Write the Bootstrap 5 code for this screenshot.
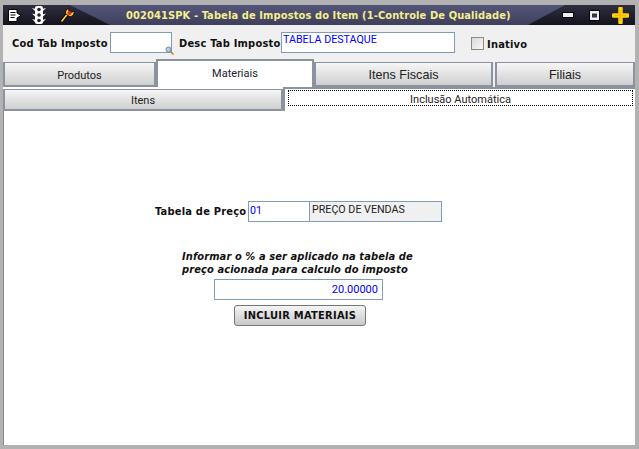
<!DOCTYPE html>
<html lang="pt"><head><meta charset="utf-8"><title>Tabela de Impostos</title>
<link href="https://cdn.jsdelivr.net/npm/bootstrap@5.3.0/dist/css/bootstrap.min.css" rel="stylesheet">
<style>
html,body{height:100%;margin:0}
body{background:#b2b2b2;padding:5px 4px 4px 3px;font-family:"DejaVu Sans",sans-serif;overflow:hidden}
.app-win{width:632px;height:440px;background:#fff;display:flex;flex-direction:column}
.title-bar{height:20px;background:linear-gradient(180deg,#2e2e40,#14141e);color:#f4f08c;font:bold 11px/19px "DejaVu Sans",sans-serif;font-stretch:condensed;position:relative;overflow:hidden;flex:none}
.title-bar::before{content:"";position:absolute;inset:0;background:linear-gradient(180deg,#55557a,#3f3f5c);clip-path:polygon(67px 0,562px 0,525px 100%,107px 100%)}
.title-bar>*{position:relative}
.title-bar svg{display:block;flex:none}
.ic-doc{margin-left:5px}.ic-light{margin-left:10px}.ic-key{margin-left:14px}
.title-txt{letter-spacing:.11px;white-space:nowrap;margin-left:51px}
.ic-min{margin-right:15px}.ic-max{margin-right:12px}.ic-plus{margin-right:6px}
.form-bar{height:35px;background:#f0f0f0;flex:none;padding-left:9px}
.lbl{font:bold 11px "DejaVu Sans",sans-serif;font-stretch:condensed;color:#111;white-space:nowrap;letter-spacing:.22px;flex:none}
.w-cod{width:98px;padding-top:2px}.w-desc{width:102px;padding-top:2px}.w-price{width:93px}
.fld{height:21px;border:1px solid #7f9db9;background:#fff;color:#00f;font:10.7px/14px Roboto,sans-serif;padding:0 1px;white-space:nowrap}
.fld-cod{width:62px;margin-right:7px;position:relative}
.fld-desc{width:174px}
.lens{position:absolute;right:-3px;bottom:-3px}
.chk-box{width:13px;height:13px;border:1px solid #8a8a8a;background:linear-gradient(135deg,#d8d8d8,#f8f8f8);margin:2px 3px 0 16px}
.tab-a{height:27px;padding-top:2px;background:#f0f0f0;flex:none}
.tab-item{background:linear-gradient(180deg,#f6f6f6,#cfcfcf);border:2px solid #8c93a0;border-top-width:1px;color:#222;text-align:center;font:11px/25px Roboto,sans-serif}
.tab-item.on{background:#fff;border-top-width:2px;border-bottom:0;height:28px;margin-top:-3px;color:#223;line-height:25px;position:relative}
.tb1{width:153px}.tb2{width:158px}.tb3{width:179px;margin-right:2px}.tb4{width:140px}
.wide{font:12.6px/25px "Liberation Sans",sans-serif}
.tab-b{height:24px;background:#fff;flex:none}
.sub1{width:280px;height:22px;margin-top:2px;line-height:22px;border-right-width:2px}
.sub2{flex:1;border-top:2px solid #8c93a0;border-left:2px solid #8c93a0;padding:1px 2px 0 3px}
.dots{height:16px;border:1px dotted #000;text-align:center;font:11px/17px Roboto,sans-serif;color:#222}
.panel{flex:1;border-left:1px solid #808890}
.price-row{margin:90px 0 0 151px}
.p-code{width:62px;padding-top:2px}
.p-desc{width:133px;background:#f0f0f0;color:#222;margin-left:-1px;padding:1px 2px 0}
.note{font:italic bold 11px/13px "DejaVu Sans",sans-serif;font-stretch:condensed;color:#111;margin:28px 0 0 178px;letter-spacing:.1px;white-space:nowrap}
.pct{width:169px;margin:3px 0 0 210px;text-align:right;padding-right:4px;line-height:19px;font-size:11px}
.inc-btn{display:block;width:132px;height:21px;margin:5px 0 0 230px;border:1px solid #777;border-radius:3px;background:linear-gradient(180deg,#f4f4f4,#c8c8c8);font:bold 11px/19px "DejaVu Sans",sans-serif;font-stretch:condensed;color:#111;padding:0;letter-spacing:.27px}
</style></head>
<body>
<div class="app-win">
 <div class="title-bar d-flex align-items-center">
  <svg class="ic-doc" width="14" height="13" viewBox="0 0 14 13"><path d="M.5.500h8.500v3.500l4 2.500-4 2.500v3.500H.5z" fill="#fff" stroke="#000"/><path d="M2.500 3.500h5M2.500 6h5M2.500 8.500h4" stroke="#000" stroke-width="1.200"/></svg>
  <svg class="ic-light" width="14" height="18" viewBox="0 0 14 18"><rect x="3" y="0" width="8" height="18" rx="2" fill="#fff"/><path d="M0 2l4 1v3zM14 2l-4 1v3zM0 7.500l4 1v3zM14 7.500l-4 1v3zM0 13l4 1v3zM14 13l-4 1v3z" fill="#fff"/><circle cx="7" cy="3.500" r="1.800" fill="#223"/><circle cx="7" cy="9" r="1.800" fill="#223"/><circle cx="7" cy="14.500" r="1.800" fill="#223"/></svg>
  <svg class="ic-key" width="15" height="15" viewBox="0 0 15 15"><path d="M1.500 13.500L7.500 6" stroke="#000" stroke-width="3.500"/><path d="M1.500 13.500L7.500 6" stroke="#fc3" stroke-width="1.800"/><path d="M5.500 5.500C5.500 3 6.500 1 8.500 .5l.5 3 2.500 1L14 3c.8 2.500-1.500 6-4.500 5.500z" fill="#fc3" stroke="#000" stroke-width=".8"/><circle cx="9.500" cy="5" r="2" fill="#e22"/></svg>
  <div class="title-txt">002041SPK - Tabela de Impostos do Item (1-Controle De Qualidade)</div>
  <div class="ms-auto d-flex align-items-center">
   <svg class="ic-min" width="12" height="6" viewBox="0 0 12 6"><rect x=".5" y=".5" width="11" height="5" fill="#eee" stroke="#000"/></svg>
   <svg class="ic-max" width="11" height="11" viewBox="0 0 11 11"><rect x=".5" y=".5" width="10" height="10" fill="#eee" stroke="#000"/><rect x="3" y="3.500" width="5" height="4" fill="#334"/></svg>
   <svg class="ic-plus" width="17" height="17" viewBox="0 0 17 17"><path d="M8.500 1.500v14M1.500 8.500h14" stroke="#ffd400" stroke-width="4.500" stroke-linecap="round"/><path d="M8.500 3v11M3 8.500h11" stroke="#ffb000" stroke-width="1.200"/></svg>
  </div>
 </div>
 <div class="form-bar d-flex align-items-center">
  <span class="lbl w-cod">Cod Tab Imposto</span>
  <div class="fld fld-cod"><svg class="lens" width="9" height="9" viewBox="0 0 9 9"><circle cx="3.500" cy="3.500" r="2.500" fill="#bcd" stroke="#68a"/><path d="M5.500 5.500l3 3" stroke="#a83" stroke-width="1.500"/></svg></div>
  <span class="lbl w-desc">Desc Tab Imposto</span>
  <div class="fld fld-desc">TABELA DESTAQUE</div>
  <div class="chk-box"></div>
  <span class="lbl mt-1">Inativo</span>
 </div>
 <div class="tab-a d-flex">
  <div class="tab-item tb1">Produtos</div>
  <div class="tab-item on tb2">Materiais</div>
  <div class="tab-item tb3 wide">Itens Fiscais</div>
  <div class="tab-item tb4 wide">Filiais</div>
 </div>
 <div class="tab-b d-flex">
  <div class="tab-item sub1">Itens</div>
  <div class="sub2"><div class="dots">Inclusão Automática</div></div>
 </div>
 <div class="panel">
  <div class="price-row d-flex align-items-center">
   <span class="lbl w-price">Tabela de Preço</span>
   <div class="fld p-code">01</div>
   <div class="fld p-desc">PREÇO DE VENDAS</div>
  </div>
  <div class="note">Informar o % a ser aplicado na tabela de<br>preço acionada para calculo do imposto</div>
  <div class="fld pct">20.00000</div>
  <button class="inc-btn" type="button">INCLUIR MATERIAIS</button>
 </div>
</div>
</body></html>
